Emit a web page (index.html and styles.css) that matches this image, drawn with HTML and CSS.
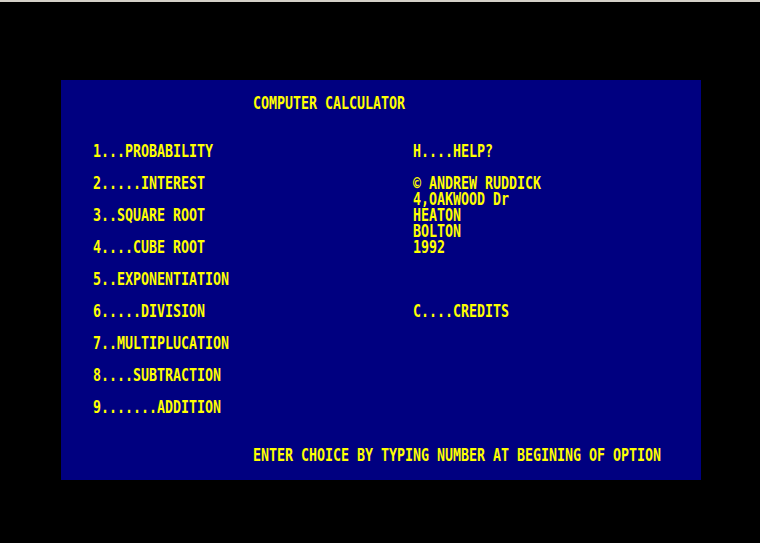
FILE: index.html
```html
<!DOCTYPE html>
<html>
<head>
<meta charset="utf-8">
<link rel="stylesheet" href="styles.css">
</head>
<body>
<div class="topbar"></div>
<div class="screen">
  <div class="row"></div>
  <div class="row"><span class="title"><span class="txt">COMPUTER CALCULATOR</span></span></div>
  <div class="row"></div>
  <div class="row"></div>
  <div class="row"><span class="left"><span class="txt">1...PROBABILITY</span></span><span class="right"><span class="txt">H....HELP?</span></span></div>
  <div class="row"></div>
  <div class="row"><span class="left"><span class="txt">2.....INTEREST</span></span><span class="right"><span class="txt">© ANDREW RUDDICK</span></span></div>
  <div class="row"><span class="left"></span><span class="right"><span class="txt">4,OAKWOOD Dr</span></span></div>
  <div class="row"><span class="left"><span class="txt">3..SQUARE ROOT</span></span><span class="right"><span class="txt">HEATON</span></span></div>
  <div class="row"><span class="left"></span><span class="right"><span class="txt">BOLTON</span></span></div>
  <div class="row"><span class="left"><span class="txt">4....CUBE ROOT</span></span><span class="right"><span class="txt">1992</span></span></div>
  <div class="row"></div>
  <div class="row"><span class="left"><span class="txt">5..EXPONENTIATION</span></span></div>
  <div class="row"></div>
  <div class="row"><span class="left"><span class="txt">6.....DIVISION</span></span><span class="right"><span class="txt">C....CREDITS</span></span></div>
  <div class="row"></div>
  <div class="row"><span class="left"><span class="txt">7..MULTIPLUCATION</span></span></div>
  <div class="row"></div>
  <div class="row"><span class="left"><span class="txt">8....SUBTRACTION</span></span></div>
  <div class="row"></div>
  <div class="row"><span class="left"><span class="txt">9.......ADDITION</span></span></div>
  <div class="row"></div>
  <div class="row"></div>
  <div class="row"><span class="title"><span class="txt">ENTER CHOICE BY TYPING NUMBER AT BEGINING OF OPTION</span></span></div>
  <div class="row"></div>
</div>
</body>
</html>
```
FILE: styles.css
```css
html, body {
  margin: 0;
  padding: 0;
  background: #000000;
  width: 760px;
  height: 543px;
  overflow: hidden;
}

.topbar {
  height: 2px;
  background: #d4d0c8;
}

.screen {
  width: 640px;
  height: 400px;
  margin: 78px 0 0 61px;
  background: #000080;
  display: flex;
  flex-direction: column;
  overflow: hidden;
}

.row {
  height: 16px;
  line-height: 16px;
  display: flex;
  white-space: pre;
  font-family: "DejaVu Sans Mono", "Liberation Mono", monospace;
  font-weight: bold;
  font-size: 18px;
  color: #ffff00;
}

.title {
  display: block;
  margin-left: 192px;
  width: 440px;
}

.left {
  display: block;
  flex: none;
  width: 320px;
  margin-left: 32px;
}

.right {
  display: block;
  flex: none;
}

.txt {
  display: inline-block;
  height: 16px;
  transform: translateY(-1px) scaleX(0.738);
  transform-origin: 0 50%;
}
```
